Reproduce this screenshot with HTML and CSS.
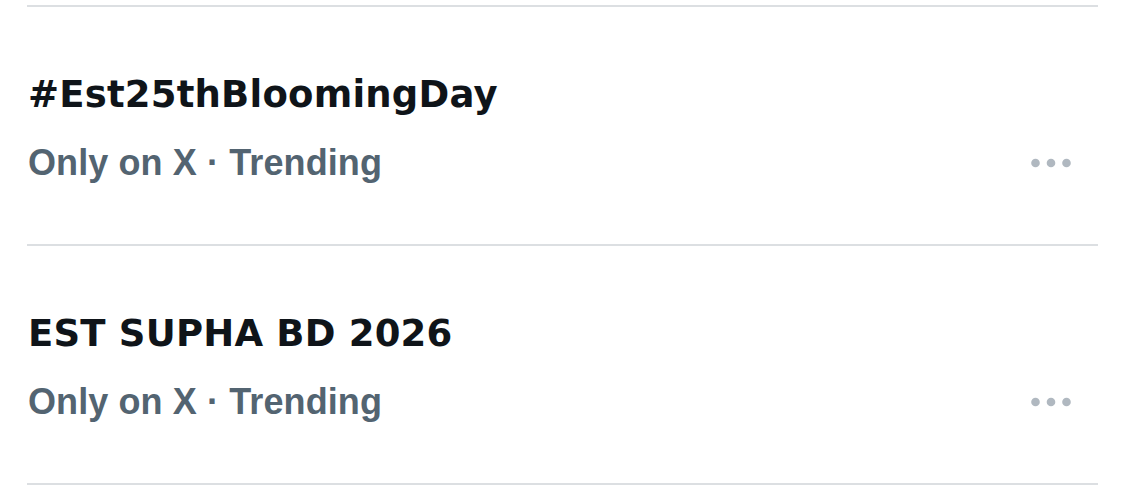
FILE: index.html
```html
<!DOCTYPE html>
<html lang="en">
<head>
<meta charset="utf-8">
<title>Trends</title>
<link rel="stylesheet" href="styles.css">
</head>
<body>
<div class="trends">
  <div class="trend">
    <div class="trend-title">#Est25thBloomingDay</div>
    <div class="trend-meta">
      <span class="trend-sub">Only on X · Trending</span>
      <svg class="more" viewBox="0 0 40 10" width="40" height="10" aria-hidden="true">
        <circle cx="4.5" cy="5" r="4.3"/>
        <circle cx="20" cy="5" r="4.3"/>
        <circle cx="35.5" cy="5" r="4.3"/>
      </svg>
    </div>
  </div>
  <div class="trend">
    <div class="trend-title">EST SUPHA BD 2026</div>
    <div class="trend-meta">
      <span class="trend-sub">Only on X · Trending</span>
      <svg class="more" viewBox="0 0 40 10" width="40" height="10" aria-hidden="true">
        <circle cx="4.5" cy="5" r="4.3"/>
        <circle cx="20" cy="5" r="4.3"/>
        <circle cx="35.5" cy="5" r="4.3"/>
      </svg>
    </div>
  </div>
</div>
</body>
</html>
```

FILE: styles.css
```css
html, body {
  margin: 0;
  padding: 0;
  background: #ffffff;
}

.trends {
  margin: 5px 27px 0 27px;
  border-top: 2px solid #dcdfe2;
}

.trend {
  padding: 66px 0 61px 0;
  border-bottom: 2px solid #dcdfe2;
}

.trend-title {
  font-family: "DejaVu Sans", "Liberation Sans", sans-serif;
  font-weight: 700;
  font-size: 37px;
  line-height: 44px;
  letter-spacing: 0.2px;
  color: #0f1419;
  padding-left: 1px;
}

.trend-meta {
  margin-top: 26px;
  height: 40px;
  display: flex;
  align-items: center;
  justify-content: space-between;
}

.trend-sub {
  font-family: "Liberation Sans", Arial, sans-serif;
  font-weight: 700;
  font-size: 36px;
  line-height: 40px;
  letter-spacing: 0.1px;
  color: #536471;
  padding-left: 1px;
}

.more {
  fill: #b0b8c0;
  margin-right: 27px;
}
```
